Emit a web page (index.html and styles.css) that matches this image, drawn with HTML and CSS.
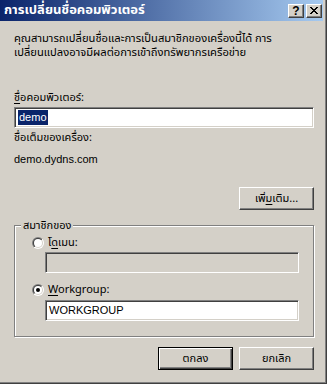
FILE: index.html
```html
<!DOCTYPE html>
<html lang="th">
<head>
<meta charset="utf-8">
<link rel="stylesheet" href="styles.css">
</head>
<body>
<div class="window">
  <div class="frame">
    <div class="titlebar">
      <span class="title">การเปลี่ยนชื่อคอมพิวเตอร์</span>
      <div class="cbtns">
        <span class="cbtn help">?</span>
        <span class="cbtn close">
          <svg width="8" height="7" viewBox="0 0 8 7" shape-rendering="crispEdges">
            <rect x="0" y="0" width="2" height="1"/><rect x="6" y="0" width="2" height="1"/>
            <rect x="1" y="1" width="2" height="1"/><rect x="5" y="1" width="2" height="1"/>
            <rect x="2" y="2" width="4" height="1"/>
            <rect x="3" y="3" width="2" height="1"/>
            <rect x="2" y="4" width="4" height="1"/>
            <rect x="1" y="5" width="2" height="1"/><rect x="5" y="5" width="2" height="1"/>
            <rect x="0" y="6" width="2" height="1"/><rect x="6" y="6" width="2" height="1"/>
          </svg>
        </span>
      </div>
    </div>
    <div class="content">
      <p class="intro">คุณสามารถเปลี่ยนชื่อและการเป็นสมาชิกของเครื่องนี้ได้ การ<br>เปลี่ยนแปลงอาจมีผลต่อการเข้าถึงทรัพยากรเครือข่าย</p>
      <div class="label l-name"><u>ชื่</u>อคอมพิวเตอร์:</div>
      <div class="edit e-name"><span class="sel">demo</span></div>
      <div class="label l-full">ชื่อเต็มของเครื่อง:</div>
      <div class="label value">demo.dydns.com</div>
      <div class="row more-row">
        <span class="btn">เพิ่<u>ม</u>เติม...</span>
      </div>
      <div class="group">
        <span class="legend">สมาชิกของ</span>
        <div class="radio-row r-domain">
          <svg class="radio" width="12" height="12" viewBox="0 0 12 12">
            <defs>
              <linearGradient id="go" x1="0" y1="0" x2="1" y2="1"><stop offset="0.5" stop-color="#808080"/><stop offset="0.5" stop-color="#ffffff"/></linearGradient>
              <linearGradient id="gi" x1="0" y1="0" x2="1" y2="1"><stop offset="0.5" stop-color="#404040"/><stop offset="0.5" stop-color="#d4d0c8"/></linearGradient>
            </defs>
            <circle cx="6" cy="6" r="6" fill="url(#go)"/>
            <circle cx="6" cy="6" r="5" fill="url(#gi)"/>
            <circle cx="6" cy="6" r="4" fill="#ffffff"/>
          </svg>
          <span class="rlabel">โ<u>ด</u>เมน:</span>
        </div>
        <div class="edit sub disabled"></div>
        <div class="radio-row r-wg">
          <svg class="radio" width="12" height="12" viewBox="0 0 12 12">
            <circle cx="6" cy="6" r="6" fill="url(#go)"/>
            <circle cx="6" cy="6" r="5" fill="url(#gi)"/>
            <circle cx="6" cy="6" r="4" fill="#ffffff"/>
            <circle cx="6" cy="6" r="2" fill="#000000"/>
          </svg>
          <span class="rlabel"><u>W</u>orkgroup:</span>
        </div>
        <div class="edit sub wg">WORKGROUP</div>
      </div>
      <div class="row actions">
        <span class="btn default">ตกลง</span>
        <span class="btn">ยกเลิก</span>
      </div>
    </div>
  </div>
</div>
</body>
</html>
```

FILE: styles.css
```css
* { box-sizing: border-box; }
html, body { margin: 0; padding: 0; }
body {
  width: 327px;
  height: 384px;
  overflow: hidden;
  background: #d4d0c8;
  font-family: Tahoma, "Noto Sans Thai", Loma, Garuda, "Liberation Sans", sans-serif;
  font-size: 11px;
  color: #000;
}
u { text-decoration: underline; text-underline-offset: 2px; }

.window {
  width: 327px;
  height: 384px;
  background: #d4d0c8;
  border-right: 1px solid #404040;
  border-bottom: 1px solid #404040;
}
.frame {
  height: 100%;
  border-right: 1px solid #808080;
  border-bottom: 1px solid #808080;
  padding-right: 2px;
}
.titlebar {
  height: 21px;
  background: linear-gradient(to right, #0a246a, #a6caf0);
  display: flex;
  align-items: center;
  justify-content: space-between;
  padding: 0 1px 0 4px;
}
.title {
  color: #fff;
  font-weight: bold;
  font-size: 13px;
  line-height: 21px;
}
.cbtns { display: flex; gap: 2px; }
.cbtn {
  width: 16px;
  height: 14px;
  background: #d4d0c8;
  border: 1px solid;
  border-color: #fff #404040 #404040 #fff;
  box-shadow: inset -1px -1px 0 #808080;
  display: flex;
  align-items: center;
  justify-content: center;
}
.help {
  font-family: "Liberation Sans", sans-serif;
  font-weight: bold;
  font-size: 12px;
  line-height: 12px;
}

.content { padding: 11px 9px 0 14px; }
.intro { margin: 0; line-height: 14px; font-size: 11.2px; }
.label { line-height: 13px; }
.l-name { margin-top: 31px; }
.edit {
  height: 21px;
  background: #fff;
  border: 1px solid;
  border-color: #808080 #fff #fff #808080;
  box-shadow: inset 1px 1px 0 #404040, inset -1px -1px 0 #d4d0c8;
  padding: 2px 0 0 3px;
  line-height: 15px;
  font-family: "Liberation Sans", sans-serif;
}
.e-name { margin-top: 3px; }
.sel { background: #0a246a; color: #fff; display: inline-block; padding: 0 1px; }
.l-full { margin-top: 3px; }
.value { margin-top: 9px; font-family: "Liberation Sans", sans-serif; }

.row { display: flex; justify-content: flex-end; gap: 6px; }
.more-row { margin-top: 21px; }
.btn {
  width: 75px;
  height: 23px;
  background: #d4d0c8;
  border: 1px solid;
  border-color: #fff #404040 #404040 #fff;
  box-shadow: inset -1px -1px 0 #808080;
  display: flex;
  align-items: center;
  justify-content: center;
}
.btn.default {
  border: 1px solid #000;
  box-shadow: inset 1px 1px 0 #fff, inset -1px -1px 0 #404040, inset -2px -2px 0 #808080;
}

.group {
  position: relative;
  margin-top: 15px;
  height: 112px;
  border: 1px solid #808080;
  box-shadow: 1px 1px 0 #fff, inset 1px 1px 0 #fff;
  padding: 10px 14px 0 17px;
}
.legend {
  position: absolute;
  top: -7px;
  left: 6px;
  padding: 0 2px;
  background: #d4d0c8;
  line-height: 13px;
}
.radio-row { display: flex; align-items: center; gap: 4px; height: 13px; }
.radio { flex: none; display: block; }
.rlabel { line-height: 13px; }
.sub { margin-left: 13px; width: 254px; }
.disabled { background: #d4d0c8; margin-top: 3px; }
.r-wg { margin-top: 10px; }
.wg { margin-top: 4px; }

.actions { margin-top: 10px; }
```
